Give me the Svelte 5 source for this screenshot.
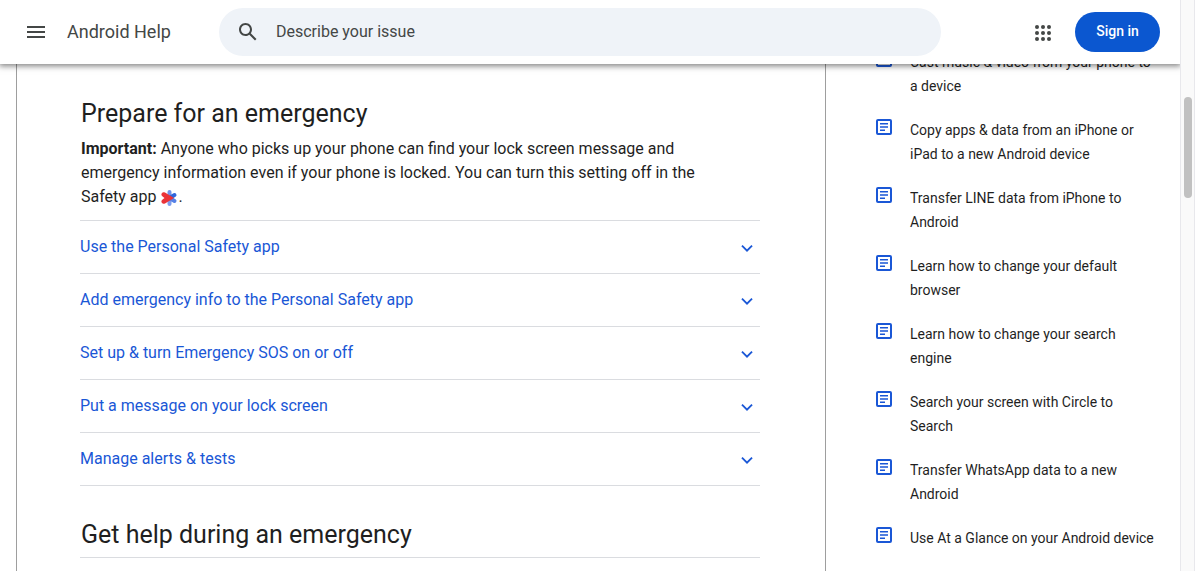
<script lang="ts">
	const topics: string[] = [
		"Use the Personal Safety app",
		"Add emergency info to the Personal Safety app",
		"Set up & turn Emergency SOS on or off",
		"Put a message on your lock screen",
		"Manage alerts & tests",
	];

	const articles: string[] = [
		"Cast music & video from your phone to a device",
		"Copy apps & data from an iPhone or iPad to a new Android device",
		"Transfer LINE data from iPhone to Android",
		"Learn how to change your default browser",
		"Learn how to change your search engine",
		"Search your screen with Circle to Search",
		"Transfer WhatsApp data to a new Android",
		"Use At a Glance on your Android device",
	];

	const dots = [6, 12, 18];
	let query = $state("");
	let opened: { [topic: string]: boolean } = $state({});
</script>

<div class="window">
	<div class="page">
		<header>
			<button class="icon-button" aria-label="Main menu">
				<svg viewBox="0 0 24 24"><path d="M3 18h18v-2H3v2zm0-5h18v-2H3v2zm0-7v2h18V6H3z" /></svg>
			</button>
			<a class="product" href="#top">Android Help</a>
			<form class="search" role="search">
				<svg viewBox="0 0 24 24">
					<path
						d="M20.49 19l-5.73-5.73C15.53 12.2 16 10.91 16 9.5 16 5.91 13.09 3 9.5 3S3 5.91 3 9.5 5.91 16 9.5 16c1.41 0 2.7-.47 3.77-1.24L19 20.49 20.49 19zM5 9.5C5 7.01 7.01 5 9.5 5S14 7.01 14 9.5 11.99 14 9.5 14 5 11.99 5 9.5z"
					/>
				</svg>
				<input
					type="text"
					aria-label="Describe your issue"
					placeholder="Describe your issue"
					bind:value={query}
				/>
			</form>
			<button class="icon-button" aria-label="Google apps">
				<svg viewBox="0 0 24 24">
					{#each dots as y}
						{#each dots as x}
							<circle cx={x} cy={y + 1} r="2" />
						{/each}
					{/each}
				</svg>
			</button>
			<button class="sign-in">Sign in</button>
		</header>

		<div class="columns">
			<main>
				<h2>Prepare for an emergency</h2>
				<p>
					<strong>Important:</strong> Anyone who picks up your phone can find your lock screen message
					and emergency information even if your phone is locked. You can turn this setting off in the
					Safety app
					<svg class="safety" viewBox="0 0 18 18" role="img" aria-label="Personal Safety">
						<g stroke-width="4" stroke-linecap="round">
							<path d="M9.500 9V3" stroke="#6f93ea" />
							<path d="M9.500 9v6" stroke="#7d9cec" />
							<path d="M9.500 9l5-3" stroke="#2f66dc" />
							<path d="M9.500 9l5 3" stroke="#5581e6" />
						</g>
						<path
							d="M1.800 4.200c.9-1.300 2-1.200 3.200-.6L14 9l-9 5.400c-1.200.6-2.300.6-3.200-.6-.8-1.300-.4-2.400.8-3.200L4.500 9 2.600 7.400C1.400 6.600 1 5.500 1.800 4.200z"
							fill="#ea3338"
						/>
					</svg>.
				</p>
				<ul class="topics">
					{#each topics as topic}
						<li>
							<button
								aria-expanded={!!opened[topic]}
								onclick={() => (opened[topic] = !opened[topic])}
							>
								{topic}
								<svg viewBox="0 0 24 24"><path d="M6.500 9.500l5.500 5.500 5.500-5.500" /></svg>
							</button>
						</li>
					{/each}
				</ul>
				<h2 class="next">Get help during an emergency</h2>
				<hr />
			</main>

			<nav aria-label="Related articles">
				{#each articles as article}
					<a href="#article">
						<svg viewBox="0 0 16 16">
							<rect x="1" y="1" width="14" height="14" rx="1" />
							<path d="M4 4.800h8M4 8h8M4 11.200h5" />
						</svg>
						<span>{article}</span>
					</a>
				{/each}
			</nav>
		</div>
	</div>
	<div class="scrollbar"><div class="thumb"></div></div>
</div>

<style>
	:global(body) {
		background: #fff;
		color: #1f1f1f;
		font-family: Roboto, "Liberation Sans", sans-serif;
	}

	.window {
		display: flex;
		height: 100vh;
		overflow: hidden;
	}

	.page {
		flex: 1;
		min-width: 0;
		overflow: hidden;
	}

	button {
		border: 0;
		padding: 0;
		background: none;
		font: inherit;
		cursor: pointer;
	}

	a {
		color: inherit;
		text-decoration: none;
	}

	header {
		position: relative;
		z-index: 1;
		display: flex;
		align-items: center;
		height: 64px;
		box-sizing: border-box;
		padding: 0 20px 0 24px;
		background: #fff;
		box-shadow: 0 1px 6px 1px rgba(0, 0, 0, 0.5);
	}

	.icon-button {
		width: 24px;
		height: 24px;
	}

	.icon-button svg,
	.search svg {
		display: block;
		width: 24px;
		height: 24px;
		fill: #444746;
	}

	.product {
		width: 152px;
		margin-left: 19px;
		color: #444746;
		font-size: 18px;
		line-height: 24px;
		white-space: nowrap;
	}

	.search {
		display: flex;
		flex: 1;
		align-items: center;
		gap: 16px;
		height: 48px;
		box-sizing: border-box;
		margin-right: 90px;
		padding: 0 17px;
		border-radius: 24px;
		background: #eff3f8;
	}

	.search input {
		flex: 1;
		min-width: 0;
		border: 0;
		padding: 0 0 2px;
		outline: 0;
		background: none;
		color: #444746;
		font: inherit;
		font-size: 16px;
	}

	.search input::placeholder {
		color: #444746;
		opacity: 1;
	}

	.sign-in {
		width: 85px;
		height: 40px;
		margin-left: 20px;
		padding-bottom: 2px;
		border-radius: 20px;
		background: #0b57d0;
		color: #fff;
		font-size: 14px;
		font-weight: 500;
	}

	.columns {
		display: grid;
		grid-template-columns: minmax(0, 1fr) 304px;
		column-gap: 50px;
		padding-left: 16px;
	}

	main {
		min-height: 100vh;
		padding: 34px 65px 0 63px;
		border: solid #9e9e9e;
		border-width: 0 1px;
	}

	h2 {
		margin: 0;
		padding-left: 1px;
		font-size: 25px;
		font-weight: 400;
		line-height: 32px;
	}

	p {
		margin: 7px 0 11px;
		padding: 0 30px 0 1px;
		font-size: 16px;
		line-height: 24px;
	}

	.safety {
		width: 18px;
		height: 18px;
		vertical-align: -5px;
	}

	.topics {
		margin: 0;
		padding: 0;
		border-bottom: 1px solid #dadce0;
		list-style: none;
	}

	.topics li {
		border-top: 1px solid #dadce0;
	}

	.topics button {
		display: flex;
		align-items: center;
		justify-content: space-between;
		width: 100%;
		height: 52px;
		padding: 0 2px 1px 0;
		color: #1a57d6;
		font-size: 16px;
		text-align: left;
	}

	.topics svg {
		width: 22px;
		height: 22px;
		margin-top: 2px;
		fill: none;
		stroke: #1a57d6;
		stroke-width: 2;
	}

	.next {
		margin-top: 33px;
	}

	hr {
		margin: 6px 0 0;
		border: 0;
		border-top: 1px solid #dadce0;
	}

	/* the list is scrolled partly under the header */
	nav {
		display: flex;
		flex-direction: column;
		gap: 20px;
		margin-top: -14px;
		padding-right: 24px;
	}

	nav a {
		display: flex;
		gap: 18px;
		font-size: 14px;
		line-height: 24px;
	}

	nav svg {
		flex: none;
		width: 16px;
		height: 16px;
		margin-top: 1px;
		fill: none;
		stroke: #1a57d6;
		stroke-width: 2;
	}

	nav path {
		stroke-width: 1.5;
	}

	.scrollbar {
		flex: none;
		width: 15px;
		box-sizing: border-box;
		padding: 97px 3px 0;
		border: solid #e8e8ec;
		border-width: 0 1px;
		background: #fafafa;
	}

	.thumb {
		width: 8px;
		height: 101px;
		border-radius: 4px;
		background: #c1c1c1;
	}
</style>
